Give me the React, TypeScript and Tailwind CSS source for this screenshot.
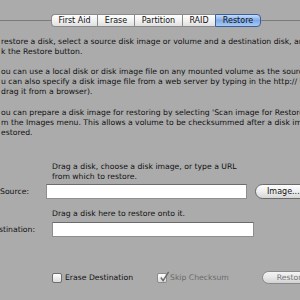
import React from "react";

const tabs = [
  { label: "First Aid", w: "w-[46px]", first: true },
  { label: "Erase", w: "w-[37px]" },
  { label: "Partition", w: "w-[48px]" },
  { label: "RAID", w: "w-[33px]" },
  { label: "Restore", w: "w-[46px]", selected: true, last: true },
];

const paragraphs = [
  [
    "restore a disk, select a source disk image or volume and a destination disk, and then",
    "k the Restore button.",
  ],
  [
    "ou can use a local disk or disk image file on any mounted volume as the source.",
    "u can also specify a disk image file from a web server by typing in the http:// URL",
    "drag it from a browser).",
  ],
  [
    "ou can prepare a disk image for restoring by selecting 'Scan image for Restore'",
    "m the Images menu. This allows a volume to be checksummed after a disk image is",
    "estored.",
  ],
];

function Checkbox({ checked, disabled }: { checked?: boolean; disabled?: boolean }) {
  return (
    <span
      className={
        "relative flex h-[10px] w-[10px] shrink-0 rounded-[2px] border bg-gradient-to-b from-white to-[#dcdcdc] " +
        (disabled ? "border-[#8c8c8c]" : "border-[#6e6e6e]")
      }
    >
      {checked && (
        <svg viewBox="0 0 12 12" className="absolute -top-[3px] left-[1px] h-[12px] w-[11px]">
          <path
            d="M2 6.5 L4.5 10 L10.5 0.5"
            fill="none"
            stroke={disabled ? "#6a6a6a" : "#111"}
            strokeWidth="1.6"
          />
        </svg>
      )}
    </span>
  );
}

export default function App() {
  return (
    <div className="h-[300px] w-[300px] overflow-hidden bg-[#ababab] font-['DejaVu_Sans',sans-serif] text-[7.7px] leading-[10px] text-[#111]">
      {/* tab strip over the divider line */}
      <div className="mt-[14px] flex h-[13px] items-center text-[8px]">
        <div className="h-px w-[51px] bg-[#7a7a7a]" />
        {tabs.map((t) => (
          <div
            key={t.label}
            className={
              "flex h-[13px] items-center justify-center border-y border-l " +
              t.w +
              (t.first ? " rounded-l-[4px]" : "") +
              (t.last ? " rounded-r-[4px] border-r" : "") +
              (t.selected
                ? " border-[#3a5f9a] bg-gradient-to-b from-[#c9dcf7] via-[#7eaaea] to-[#a9cbf5]"
                : " border-[#8a8a8a] bg-gradient-to-b from-white via-[#f1f1f1] to-[#e0e0e0]")
            }
          >
            {t.label}
          </div>
        ))}
        <div className="h-px flex-1 bg-[#7a7a7a]" />
      </div>

      {/* help text */}
      <div className="mt-[10px] flex flex-col gap-[10px] pl-[1px]">
        {paragraphs.map((p, i) => (
          <div key={i} className={i === 2 ? "mt-px" : ""}>
            {p.map((line) => (
              <div key={line} className="whitespace-nowrap">
                {line}
              </div>
            ))}
          </div>
        ))}
      </div>

      {/* restore form */}
      <div className="mt-[24px] pl-[52px]">
        <div>Drag a disk, choose a disk image, or type a URL</div>
        <div>from which to restore.</div>
      </div>
      <div className="mt-[2px] flex items-center">
        <div className="w-[35px] text-right">Source:</div>
        <div className="ml-[17px] h-[15px] w-[201px] shrink-0 border border-[#8e8e8e] border-t-[#6c6c6c] bg-white" />
        <div className="ml-[8px] flex h-[15px] w-[60px] shrink-0 items-center rounded-full border border-[#6a6a6a] bg-gradient-to-b from-white via-[#eeeeee] to-[#d6d6d6] pl-[11px] text-[8px]">
          Image...
        </div>
      </div>

      <div className="mt-[10px] pl-[52px]">Drag a disk here to restore onto it.</div>
      <div className="mt-[3px] flex items-center">
        <div className="flex w-[35px] shrink-0 justify-end overflow-hidden">
          <span className="shrink-0 whitespace-nowrap">Destination:</span>
        </div>
        <div className="ml-[17px] h-[15px] w-[202px] shrink-0 border border-[#8e8e8e] border-t-[#6c6c6c] bg-white" />
      </div>

      <div className="mt-[34px] flex h-[13px] items-center whitespace-nowrap">
        <div className="ml-[52px] flex shrink-0 items-center gap-[3px]">
          <Checkbox />
          <span>Erase Destination</span>
        </div>
        <div className="ml-[24px] flex shrink-0 items-center gap-[3px] text-[#6b6b6b]">
          <Checkbox checked disabled />
          <span>Skip Checksum</span>
        </div>
        <div className="ml-[33px] flex h-[13px] w-[60px] shrink-0 items-center rounded-full border border-[#8a8a8a] bg-gradient-to-b from-[#f4f4f4] via-[#e6e6e6] to-[#d2d2d2] pl-[14px] text-[#777]">
          Restore
        </div>
      </div>
    </div>
  );
}
